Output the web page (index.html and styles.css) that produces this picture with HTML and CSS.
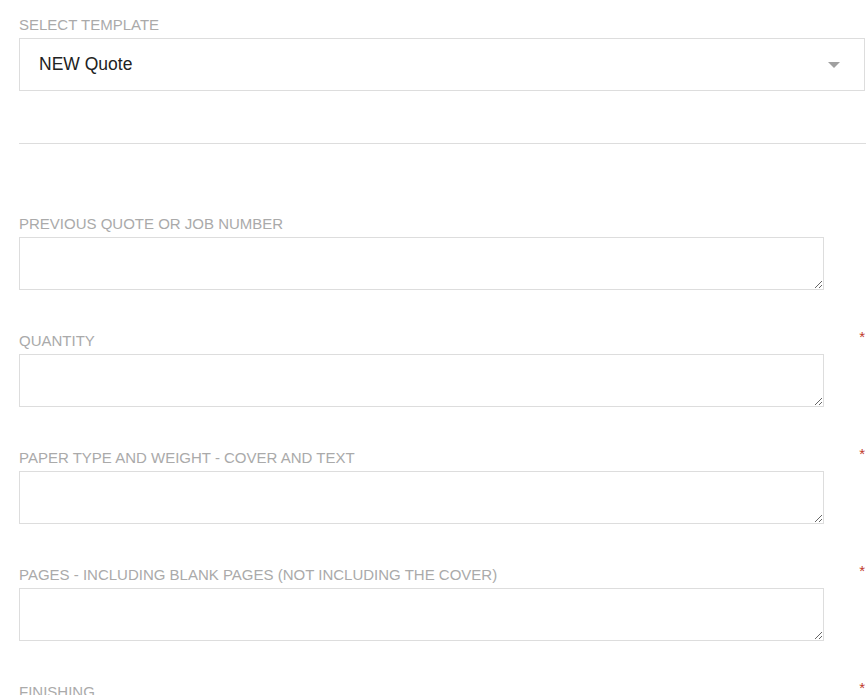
FILE: index.html
```html
<!DOCTYPE html>
<html lang="en">
<head>
    <meta charset="UTF-8">
    <meta name="viewport" content="width=device-width, initial-scale=1.0">
    <title>New Quote</title>
    <link rel="stylesheet" href="styles.css">
</head>
<body>
    <form class="quote-form">
        <div class="template">
            <label class="field-label" for="template">Select Template</label>
            <div class="select-box">
                <span class="select-value">NEW Quote</span>
                <span class="caret"></span>
            </div>
        </div>

        <hr class="divider">

        <div class="field">
            <div class="label-row">
                <label class="field-label" for="prev">Previous Quote or Job Number</label>
            </div>
            <textarea id="prev"></textarea>
        </div>

        <div class="field">
            <div class="label-row">
                <label class="field-label" for="qty">Quantity</label>
                <span class="required">*</span>
            </div>
            <textarea id="qty"></textarea>
        </div>

        <div class="field">
            <div class="label-row">
                <label class="field-label" for="paper">Paper Type and Weight - Cover and Text</label>
                <span class="required">*</span>
            </div>
            <textarea id="paper"></textarea>
        </div>

        <div class="field">
            <div class="label-row">
                <label class="field-label" for="pages">Pages - Including Blank Pages (Not including the cover)</label>
                <span class="required">*</span>
            </div>
            <textarea id="pages"></textarea>
        </div>

        <div class="field">
            <div class="label-row">
                <label class="field-label" for="finish">Finishing</label>
                <span class="required">*</span>
            </div>
            <textarea id="finish"></textarea>
        </div>
    </form>
</body>
</html>
```

FILE: styles.css
```css
body {
    margin: 0;
    background-color: #fff;
    font-family: "Liberation Sans", Arial, sans-serif;
    color: #222;
}
.quote-form {
    padding: 14px 0 0 19px;
}
.field-label {
    display: block;
    font-size: 15px;
    line-height: 20px;
    padding-top: 1px;
    color: #aaa;
    text-transform: uppercase;
}
.template .field-label {
    margin-bottom: 3px;
}
.select-box {
    display: flex;
    align-items: center;
    justify-content: space-between;
    height: 51px;
    border: 1px solid #ddd;
    margin-right: 1px;
    padding: 0 24px 0 19px;
}
.select-value {
    font-size: 17.5px;
}
.caret {
    width: 0;
    height: 0;
    border-left: 6px solid transparent;
    border-right: 6px solid transparent;
    border-top: 6px solid #a0a0a0;
}
.divider {
    border: none;
    border-top: 1px solid #ddd;
    margin: 52px 0 69px 0;
}
.field {
    margin-bottom: 40px;
}
.label-row {
    display: flex;
    justify-content: space-between;
    margin-bottom: 3px;
    padding-right: 1px;
}
.required {
    font-size: 15px;
    line-height: 14px;
    color: #c0392b;
}
textarea {
    display: block;
    box-sizing: border-box;
    width: 805px;
    height: 53px;
    border: 1px solid #ddd;
    font-family: inherit;
    font-size: 14px;
}
```
